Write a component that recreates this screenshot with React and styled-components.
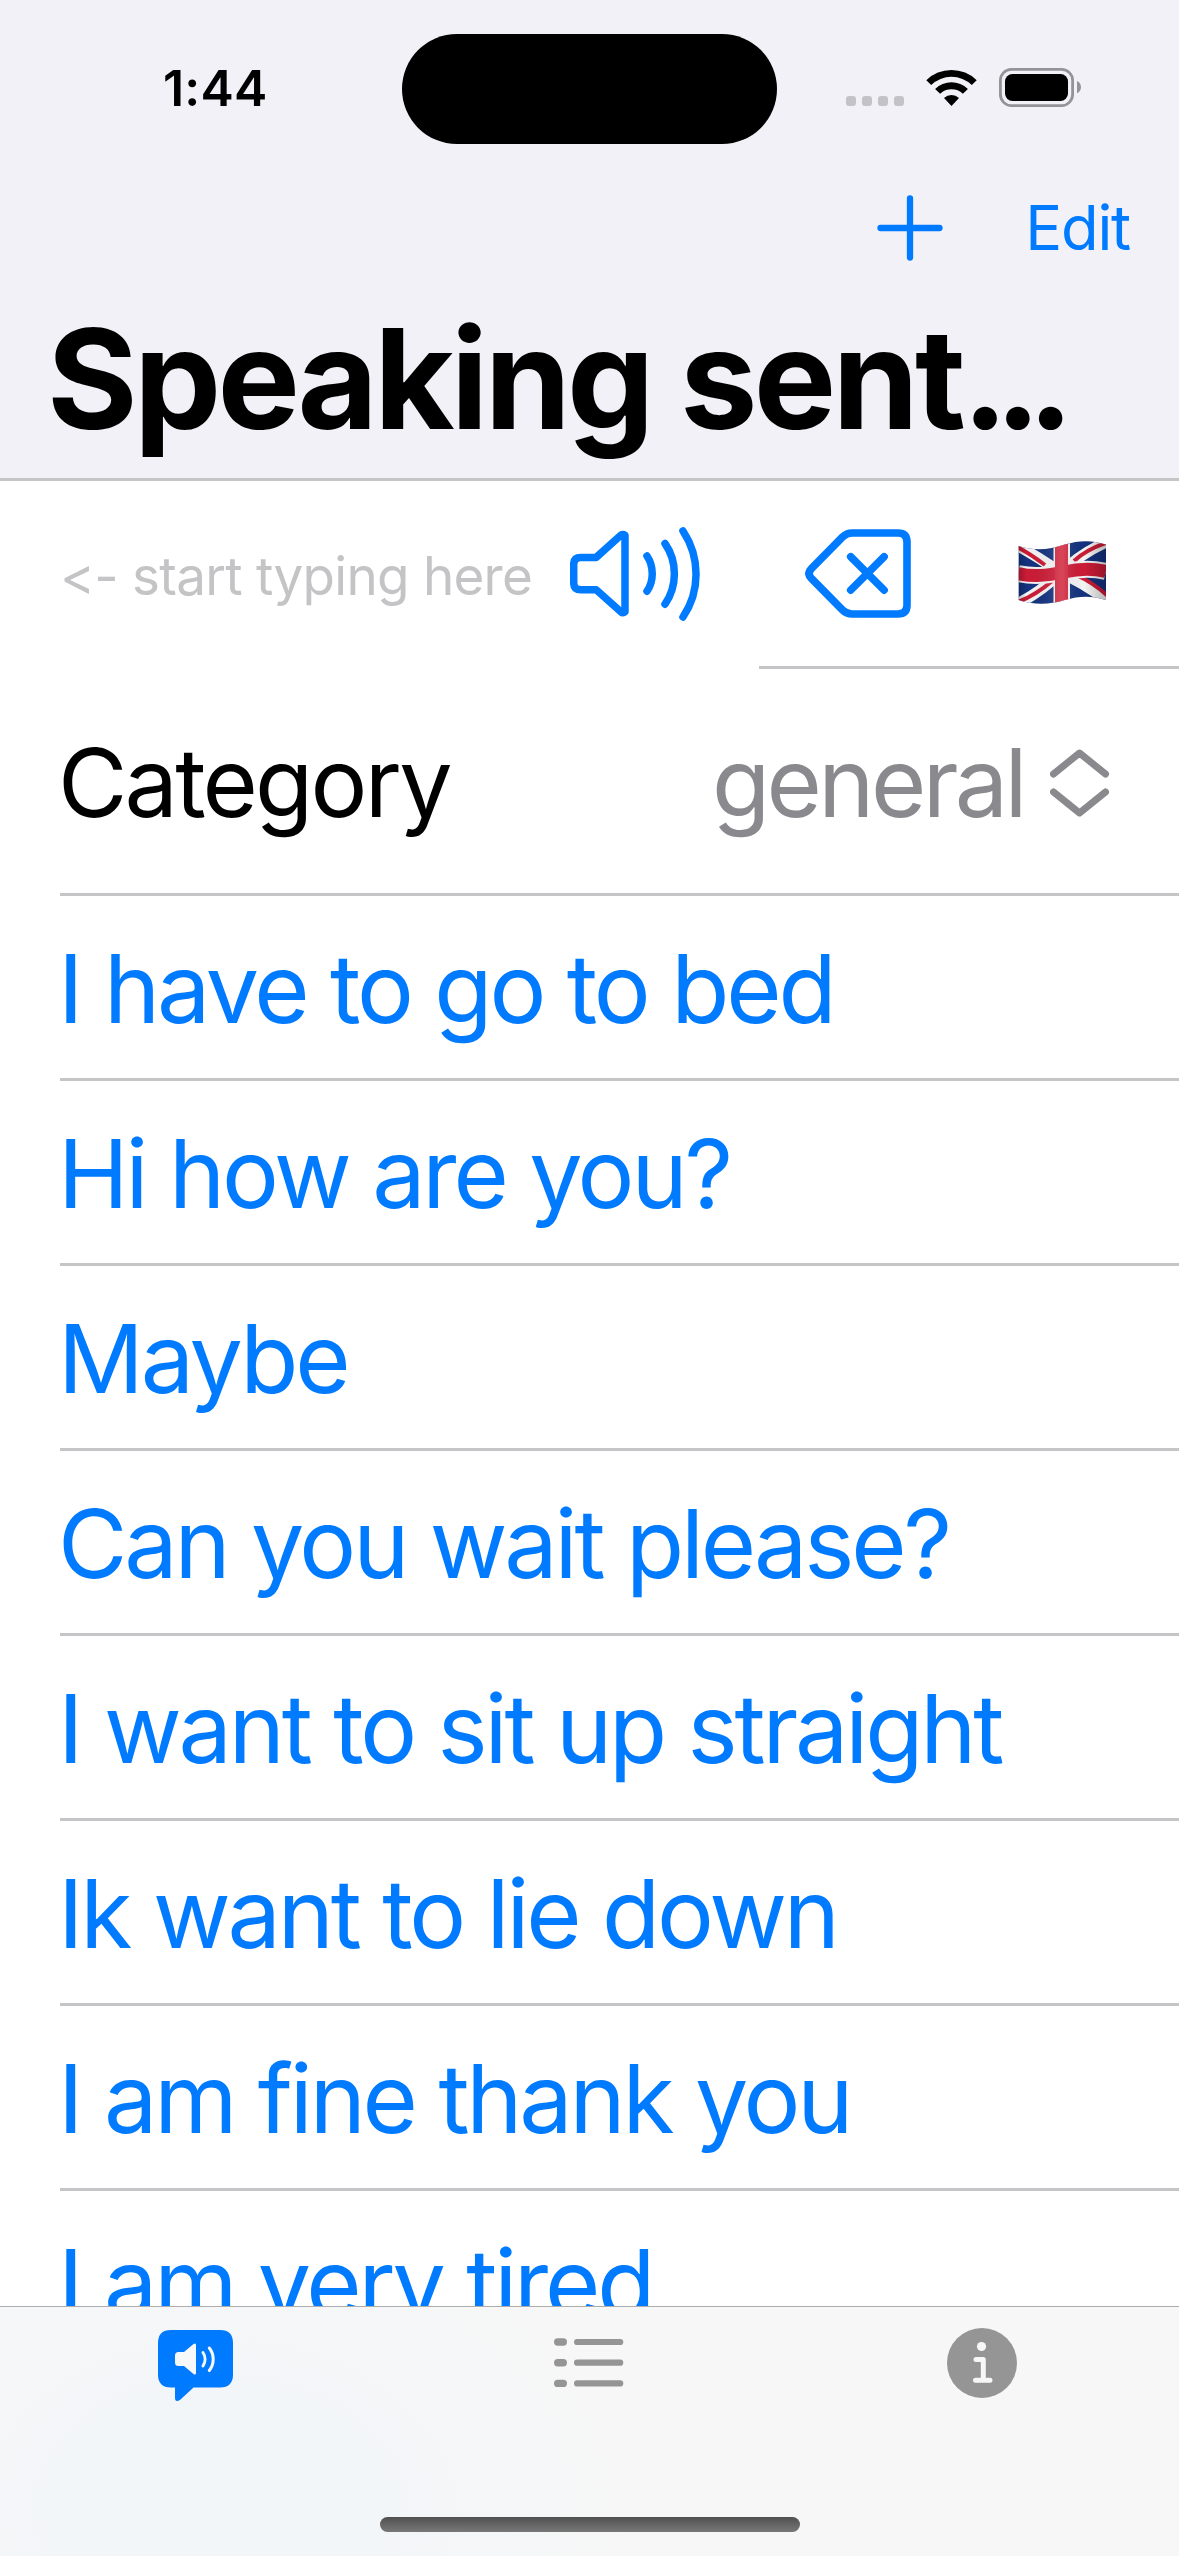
import styled, { createGlobalStyle } from 'styled-components'

const GlobalStyle = createGlobalStyle`
    * {
        box-sizing: border-box;
    }
    body {
        margin: 0;
        background: #fff;
        font-family: Inter, 'Liberation Sans', sans-serif;
    }
    svg {
        display: block;
        flex-shrink: 0;
    }
`

// create styled components
const Screen = styled.div`
    width: 1179px;
    height: 2556px;
    display: flex;
    flex-direction: column;
    overflow: hidden;
    background: #fff;
`
const Header = styled.header`
    height: 481px;
    flex-shrink: 0;
    background: #f2f1f7;
    border-bottom: 3px solid #c5c5c8;
`
const StatusBar = styled.div`
    height: 177px;
    display: grid;
    grid-template-columns: 402px 375px 1fr;
`
const Time = styled.div`
    padding: 58px 0 0 163px;
    font-size: 50px;
    line-height: 60px;
    font-weight: 600;
    letter-spacing: 0.2px;
`
const Island = styled.div`
    height: 110px;
    margin-top: 34px;
    border-radius: 55px;
    background: #000;
`
const StatusIcons = styled.div`
    display: flex;
    padding: 66px 0 0 69px;
`
const Toolbar = styled.div`
    height: 101px;
    display: flex;
    justify-content: flex-end;
    align-items: center;
    padding-right: 49px;
    gap: 82px;
    color: #007aff;
`
const Edit = styled.span`
    font-size: 61.5px;
    line-height: 72px;
    letter-spacing: -1.2px;
`
const Title = styled.h1`
    margin: 0;
    padding: 23px 0 0 47px;
    font-size: 138.5px;
    line-height: 156px;
    font-weight: 700;
    letter-spacing: -3.75px;
    white-space: nowrap;
`
const Dots = styled.span`
    letter-spacing: -13.5px;
`
const List = styled.main`
    height: 1825px;
    flex-shrink: 0;
    overflow: hidden;
`
const InputRow = styled.div`
    height: 188px;
    display: flex;
    padding-left: 60px;
`
const Placeholder = styled.span`
    width: 510px;
    padding-top: 61px;
    font-size: 53px;
    line-height: 68px;
    letter-spacing: -0.75px;
    font-feature-settings: 'calt' 0;
    color: #c4c4c6;
    white-space: nowrap;
`
const SpeakCell = styled.div`
    width: 189px;
    padding-top: 44px;
`
const ActionCell = styled.div`
    flex: 1;
    display: flex;
    align-items: center;
    gap: 107px;
    padding: 0 0 2px 46px;
    border-bottom: 3px solid #c5c5c7;
`
const Row = styled.div`
    height: ${props => (props.$tall ? '227px' : '185px')};
    margin-left: 60px;
    padding: ${props => (props.$tall ? '4px 69px 0 0' : '3px 0 0')};
    display: flex;
    align-items: center;
    justify-content: space-between;
    border-bottom: 3px solid #c5c5c7;
    font-size: 95px;
    line-height: 120px;
    letter-spacing: ${props => (props.$tall ? '-2.8px' : '-3.15px')};
    text-indent: -2px;
    white-space: nowrap;
    color: ${props => props.color || '#007aff'};
`
const Value = styled.span`
    display: flex;
    align-items: center;
    gap: 26px;
    letter-spacing: -3.6px;
    color: #8a898e;
`
const TabBar = styled.nav`
    position: relative;
    flex: 1;
    display: grid;
    grid-template-columns: repeat(3, 393px);
    border-top: 1px solid #adadb0;
    background: radial-gradient(ellipse 420px 300px at 220px 200px, #f2f6f8, #f3f6f8 40%, #f7f7f7);
`
const Tab = styled.div`
    display: flex;
    justify-content: center;
    padding: 19px 2px 0 0;
`
const HomeIndicator = styled.div`
    position: absolute;
    left: 380px;
    bottom: 24px;
    width: 420px;
    height: 15px;
    border-radius: 8px;
    background: linear-gradient(#4f504f, #787878);
`

// icons
const StatusGlyphs = () => (
    <svg width='240' height='44' viewBox='846 66 240 44'>
        {[846, 862, 878, 894].map(x => (
            <rect key={x} x={x} y='96' width='10' height='10' rx='3.2' fill='#c3c2c7' />
        ))}
        <path d='M926.3 80.2a36 36 0 0 1 50.4 0l-4.9 4.7a29.5 29.5 0 0 0-40.6 0z' />
        <path d='M935.1 88.9a23.8 23.8 0 0 1 32.8 0l-5 4.9a16.7 16.7 0 0 0-22.8 0z' />
        <path d='M944 98a11.2 11.2 0 0 1 15 0l-7.5 8z' />
        <rect x='1000.4' y='69.4' width='72.2' height='36.2' rx='11' fill='none' stroke='#949398' strokeWidth='2.8' />
        <rect x='1005' y='74' width='63' height='27' rx='7.5' />
        <path d='M1077 81c5.3 2.2 5.3 10 0 12.3z' fill='#949398' />
    </svg>
)

const PlusIcon = () => (
    <svg width='66' height='66' viewBox='0 0 66 66' stroke='currentColor' strokeWidth='6.3' strokeLinecap='round'>
        <path d='M33 3.5v59M3.5 33h59' />
    </svg>
)

const SpeakerIcon = () => (
    <svg width='132' height='98' viewBox='570 525 132 98' fill='none' stroke='#007aff' strokeWidth='7.5' strokeLinecap='round' strokeLinejoin='round'>
        <path d='M596.2 557.4h-15.5q-7 0-7 7v18.4q0 7 7 7h15.5l24.6 22q2.2 1.8 4.2 0V535.2q-2-1.4-4.2 0z' />
        <path d='M647 556c7 10.5 7 25 0 35.2M665 543.5c12.5 18 12.5 42.5 0 60.7M683 531c17.4 26.5 17.4 60 0 86' />
    </svg>
)

const DeleteIcon = () => (
    <svg width='106' height='92' viewBox='805 527 106 92' fill='none' stroke='#007aff' strokeWidth='7.6' strokeLinecap='round' strokeLinejoin='round'>
        <path d='M852 533H898q9 0 9 9v63q0 9-9 9h-46q-5.5 0-9.5-4l-31-31.5q-5-5 0-10L842.5 537q4-4 9.500-4z' />
        <path d='M850.7 556.7l33.400 33.400M884.100 556.700l-33.400 33.400' />
    </svg>
)

const FlagIcon = () => (
    <svg width='88' height='66' viewBox='1018 541 88 66'>
        <defs>
            <clipPath id='flag'>
                <path d='M1018.7 547c16 5 30 4 46-1.5 15-4.5 27-4.5 41.3 0v55.5c-14-4.5-26-4.5-41.3 0-16 5-31 5-46 0z' />
            </clipPath>
            <linearGradient id='shade' x1='0' y1='0' x2='1' y2='0'>
                <stop offset='0' stopColor='#000' stopOpacity='.25' />
                <stop offset='.1' stopColor='#000' stopOpacity='0' />
                <stop offset='.5' stopColor='#fff' stopOpacity='.14' />
                <stop offset='.75' stopColor='#000' stopOpacity='0' />
                <stop offset='1' stopColor='#000' stopOpacity='.25' />
            </linearGradient>
        </defs>
        <g clipPath='url(#flag)'>
            <path fill='#14327f' d='M1018 541h88v66h-88z' />
            <path fill='none' stroke='#f4f4f4' strokeWidth='11' d='M1014 545q20 10 47 29 25 11 48 29M1014 606q20-8 47-32 20-20 48-32' />
            <path fill='none' stroke='#cc1c37' strokeWidth='4' d='M1017 548q12 6 28 18M1018 603q18-7 34-21M1074 562q12-11 32-18M1078 577q14 6 30 20' />
            <path fill='none' stroke='#f4f4f4' strokeWidth='17' d='M1018 574.5c16 3.5 29 2 46-1.5 15-3.5 28-4 42-.5' />
            <path fill='#f4f4f4' d='M1053.5 541h16.5v66h-16.5z' />
            <path fill='none' stroke='#cc1c37' strokeWidth='13' d='M1018 574.5c16 3.5 29 2 46-1.5 15-3.5 28-4 42-.5' />
            <path fill='#d2283f' d='M1055 541h13v66h-13z' />
            <path fill='url(#shade)' d='M1018 541h88v66h-88z' />
        </g>
    </svg>
)

const UpDownIcon = () => (
    <svg width='60' height='70' viewBox='1050 747 60 70' fill='none' stroke='currentColor' strokeWidth='7' strokeLinecap='round' strokeLinejoin='round'>
        <path d='M1053.5 773l26-21 26 21M1053.5 791l26 21 26-21' />
    </svg>
)

const BubbleIcon = () => (
    <svg width='76' height='76' viewBox='158 2326 76 76'>
        <path fill='#007aff' d='M171 2330h49q13 0 13 13v31.5q0 13-13 13h-26.5l-13 12q-5.500 4-5.500-2v-10h-4q-13 0-13-13V2343q0-13 13-13z' />
        <path fill='#f7f8fa' d='M178.5 2352h5.5l9.500-8q2.500-1.500 2.500 1v28q0 2.500-2.500 1l-9.500-8h-5.500q-3.500 0-3.500-3.500v-7q0-3.500 3.500-3.500z' />
        <path fill='none' stroke='#f7f8fa' strokeWidth='3' strokeLinecap='round' d='M203 2352.5c2.7 4 2.7 9.500 0 13.500M209.300 2348c5.200 6.500 5.200 16 0 22.500' />
    </svg>
)

const ListIcon = () => (
    <svg width='70' height='76' viewBox='554 2326 70 76' fill='#959595'>
        {[2342, 2362.7, 2383.4].map(y => (
            <g key={y}>
                <rect x='554' y={y - 3.7} width='13' height='7.4' rx='3.7' />
                <rect x='574' y={y - 3.1} width='49.3' height='6.2' rx='3.1' />
            </g>
        ))}
    </svg>
)

const InfoIcon = () => (
    <svg width='72' height='76' viewBox='946 2326 72 76'>
        <circle cx='982' cy='2363' r='35' fill='#959595' />
        <circle cx='981.5' cy='2346.5' r='4.6' fill='#f7f7f7' />
        <path fill='none' stroke='#f7f7f7' strokeWidth='5' strokeLinecap='round' strokeLinejoin='round' d='M976 2359.5h7.3v20.5M975.5 2380.3h14.5' />
    </svg>
)

const sentences = [
    'I have to go to bed',
    'Hi how are you?',
    'Maybe',
    'Can you wait please?',
    'I want to sit up straight',
    'Ik want to lie down',
    'I am fine thank you',
    'I am very tired',
]

export default function App() {
    return (
        <Screen>
            <GlobalStyle />
            <Header>
                <StatusBar>
                    <Time>1:44</Time>
                    <Island />
                    <StatusIcons>
                        <StatusGlyphs />
                    </StatusIcons>
                </StatusBar>
                <Toolbar>
                    <PlusIcon />
                    <Edit>Edit</Edit>
                </Toolbar>
                <Title>
                    Speaking sent<Dots>...</Dots>
                </Title>
            </Header>
            <List>
                <InputRow>
                    <Placeholder>&lt;- start typing here</Placeholder>
                    <SpeakCell>
                        <SpeakerIcon />
                    </SpeakCell>
                    <ActionCell>
                        <DeleteIcon />
                        <FlagIcon />
                    </ActionCell>
                </InputRow>
                <Row $tall color='#000'>
                    Category
                    <Value>
                        general
                        <UpDownIcon />
                    </Value>
                </Row>
                {sentences.map(text => (
                    <Row key={text}>{text}</Row>
                ))}
            </List>
            <TabBar>
                <Tab>
                    <BubbleIcon />
                </Tab>
                <Tab>
                    <ListIcon />
                </Tab>
                <Tab>
                    <InfoIcon />
                </Tab>
                <HomeIndicator />
            </TabBar>
        </Screen>
    )
}
